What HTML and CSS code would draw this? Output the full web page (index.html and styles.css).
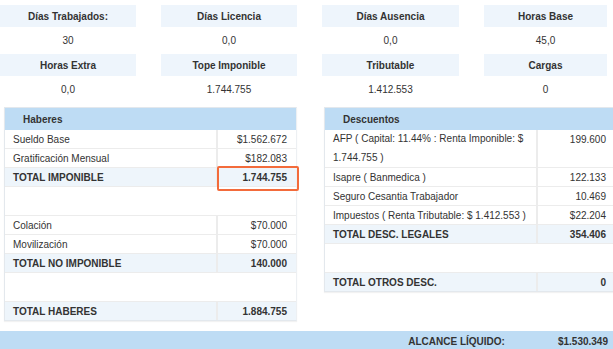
FILE: index.html
```html
<!DOCTYPE html>
<html lang="es">
<head>
<meta charset="utf-8">
<title>Liquidación</title>
<link rel="stylesheet" href="styles.css">
</head>
<body>
<div class="stats">
  <div class="stat"><div class="stat-head">Días Trabajados:</div><div class="stat-val">30</div></div>
  <div class="stat"><div class="stat-head">Días Licencia</div><div class="stat-val">0,0</div></div>
  <div class="stat"><div class="stat-head">Días Ausencia</div><div class="stat-val">0,0</div></div>
  <div class="stat"><div class="stat-head">Horas Base</div><div class="stat-val">45,0</div></div>
  <div class="stat"><div class="stat-head">Horas Extra</div><div class="stat-val">0,0</div></div>
  <div class="stat"><div class="stat-head">Tope Imponible</div><div class="stat-val">1.744.755</div></div>
  <div class="stat"><div class="stat-head">Tributable</div><div class="stat-val">1.412.553</div></div>
  <div class="stat"><div class="stat-head">Cargas</div><div class="stat-val">0</div></div>
</div>

<div class="panels">
  <div class="panel panel-left">
    <div class="panel-head">Haberes</div>
    <table class="tbl">
      <tr><td class="lbl">Sueldo Base</td><td class="val">$1.562.672</td></tr>
      <tr><td class="lbl">Gratificación Mensual</td><td class="val">$182.083</td></tr>
      <tr class="total"><td class="lbl">TOTAL IMPONIBLE</td><td class="val mark">1.744.755</td></tr>
      <tr class="spacer"><td colspan="2"></td></tr>
      <tr><td class="lbl">Colación</td><td class="val">$70.000</td></tr>
      <tr><td class="lbl">Movilización</td><td class="val">$70.000</td></tr>
      <tr class="total"><td class="lbl">TOTAL NO IMPONIBLE</td><td class="val">140.000</td></tr>
      <tr class="spacer"><td colspan="2"></td></tr>
      <tr class="total last"><td class="lbl">TOTAL HABERES</td><td class="val">1.884.755</td></tr>
    </table>
  </div>
  <div class="panel panel-right">
    <div class="panel-head">Descuentos</div>
    <table class="tbl">
      <tr><td class="lbl multi">AFP ( Capital: 11.44% : Renta Imponible: $ 1.744.755 )</td><td class="val">199.600</td></tr>
      <tr><td class="lbl">Isapre ( Banmedica )</td><td class="val">122.133</td></tr>
      <tr><td class="lbl">Seguro Cesantia Trabajador</td><td class="val">10.469</td></tr>
      <tr><td class="lbl">Impuestos ( Renta Tributable: $ 1.412.553 )</td><td class="val">$22.204</td></tr>
      <tr class="total"><td class="lbl">TOTAL DESC. LEGALES</td><td class="val">354.406</td></tr>
      <tr class="spacer"><td colspan="2"></td></tr>
      <tr class="total last"><td class="lbl">TOTAL OTROS DESC.</td><td class="val">0</td></tr>
    </table>
  </div>
</div>

<div class="net">
  <span class="net-label">ALCANCE LÍQUIDO:</span>
  <span class="net-value">$1.530.349</span>
</div>
</body>
</html>
```

FILE: styles.css
```css
html, body {
  margin: 0;
  padding: 0;
  overflow: hidden;
}
body {
  font-family: "Liberation Sans", Arial, sans-serif;
  font-size: 10px;
  color: #333;
  background: #fff;
  width: 613px;
}

.stats {
  display: grid;
  grid-template-columns: 136px 136px 137px 123px;
  column-gap: 25px;
  padding-top: 5px;
}
.stat-head {
  height: 21px;
  padding-top: 1px;
  line-height: 21px;
  text-align: center;
  font-weight: bold;
  background: #eef5fc;
}
.stat-val {
  height: 26px;
  padding-top: 1px;
  line-height: 26px;
  text-align: center;
}

.panels {
  display: flex;
  align-items: flex-start;
  gap: 27px;
  margin-top: 4px;
  padding-left: 4px;
}
.panel {
  flex: none;
  border: 1px solid #e3e8ed;
  border-right-color: #edf0f3;
  box-shadow: 0 1px 1px rgba(0, 0, 0, 0.05);
  background: #fff;
}
.panel-left { width: 291px; }
.panel-right { width: 295px; }
.panel-head {
  height: 21px;
  padding-top: 1px;
  line-height: 21px;
  padding-left: 18px;
  font-weight: bold;
  background: #bedcf4;
}

.tbl {
  width: 100%;
  border-collapse: collapse;
}
.tbl td {
  padding: 2px 9px 0 8px;
  line-height: 16px;
  border-bottom: 1px solid #ececec;
  vertical-align: top;
}
.tbl td.val {
  text-align: right;
  border-left: 2px solid #ececec;
}
.panel-left td.val { width: 61px; }
.panel-right td.val { width: 60px; padding-right: 14px; }
.tbl td.multi {
  padding-top: 0;
  line-height: 18.5px;
}
.tbl tr.total td {
  background: #eef5fb;
  font-weight: bold;
}
.tbl tr.last td { border-bottom: 0; }
.tbl tr.spacer td {
  height: 28px;
  padding: 0;
}
.tbl td.mark { position: relative; }
.tbl td.mark::after {
  content: "";
  position: absolute;
  left: -1px;
  top: -2px;
  right: -3px;
  bottom: -5px;
  border: 2px solid #f36b3b;
  border-radius: 2px;
}

.net {
  margin-top: 10px;
  background: #bedcf4;
  height: 29px;
  padding-top: 1px;
  line-height: 20px;
  display: flex;
  justify-content: flex-end;
  padding-right: 5px;
  font-weight: bold;
}
.net-value { margin-left: 53px; }
```
